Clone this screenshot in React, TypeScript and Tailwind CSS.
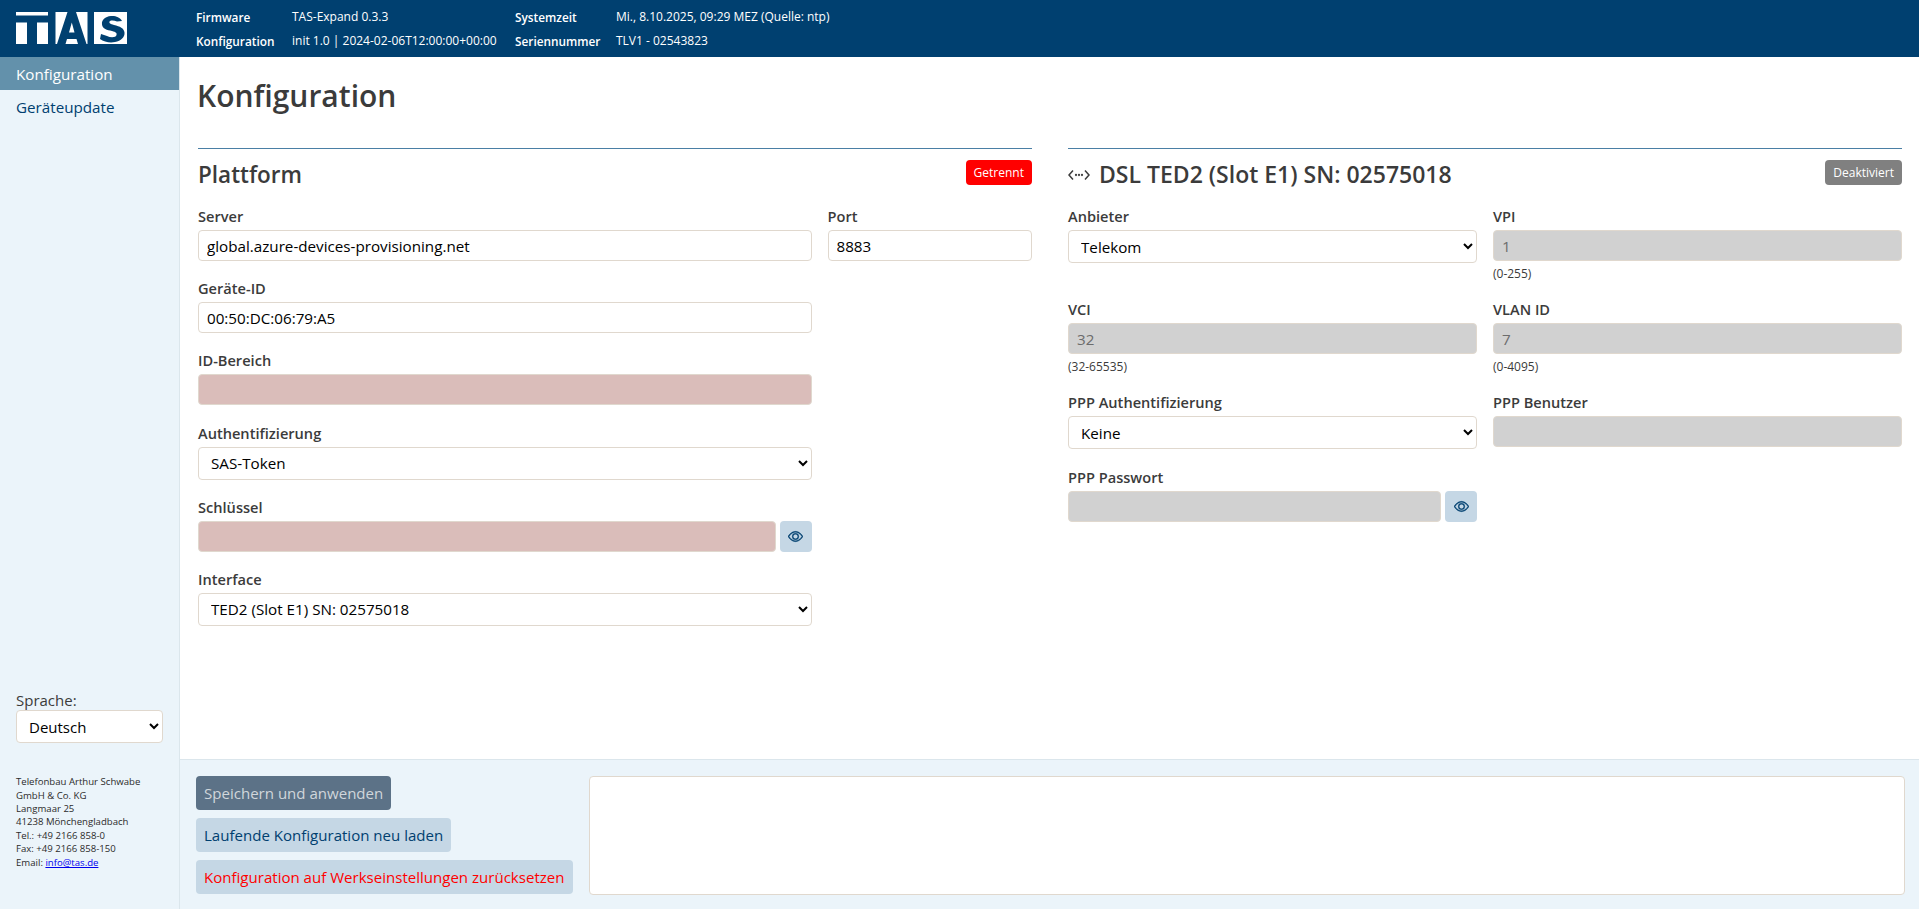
import React from "react";
import { BsEye } from "react-icons/bs";

const inputBase = "block w-full h-[31px] px-[8px] border border-[#e0d8ce] rounded-[4px] text-[15.2px] leading-[20px] outline-none";

function Label({ children }: { children: React.ReactNode }) {
  return <label className="block h-[20px] mb-[4px] text-[14.6px] leading-[21px] font-[550] text-[#3b3b3b]">{children}</label>;
}
function Text({ label, value = "", tone = "white", hint }: { label: string; value?: string; tone?: "white" | "red" | "grey"; hint?: string }) {
  const cls = tone === "white" ? "bg-white text-black" : tone === "red" ? "bg-[#dabdba] text-black" : "bg-[#d1d1d1] text-[#6c6c6c]";
  return (
    <div>
      <Label>{label}</Label>
      <input readOnly value={value} className={`${inputBase} ${cls}`} />
      {hint ? <div className="h-[21px] pt-[5px] text-[12px] leading-[16px] text-[#3b3b3b]">{hint}</div> : null}
    </div>
  );
}
function Select({ label, value }: { label: string; value: string }) {
  return (
    <div>
      <Label>{label}</Label>
      <select defaultValue={value} className="block w-full h-[33px] pl-[8px] pr-[2px] bg-white border border-[#e0d8ce] rounded-[4px] text-[15.2px] text-black outline-none">
        <option>{value}</option>
      </select>
    </div>
  );
}
function Secret({ label, tone }: { label: string; tone: string }) {
  return (
    <div>
      <Label>{label}</Label>
      <div className="flex gap-[4px]">
        <input readOnly value="" className={`${inputBase} flex-1 min-w-0 ${tone}`} />
        <button className="w-[32px] h-[31px] shrink-0 rounded-[4px] bg-[#c5d7e5] text-[#004070] flex items-center justify-center">
          <BsEye className="w-[15px] h-[15px] stroke-[0.4px]" />
        </button>
      </div>
    </div>
  );
}
function Logo() {
  return (
    <svg width="112" height="33" viewBox="0 0 112 33" className="block">
      <rect x="0" y="0" width="32" height="3.5" fill="#fff" />
      <rect x="0" y="10.5" width="11" height="21.5" fill="#fff" />
      <rect x="21" y="10.5" width="11" height="21.5" fill="#fff" />
      <rect x="39.5" y="0" width="32" height="32" fill="#fff" />
      <path d="M41 32 L51.5 0 H60 L70.5 32 H62 L60.5 27 H51 L49.5 32 Z M53 20.5 H58.5 L55.8 10.5 Z" fill="#004070" fillRule="evenodd" />
      <rect x="78" y="0" width="33" height="32" fill="#fff" />
      <path d="M106 9 C104 5 99 3.5 95 4 C89 4.5 85.5 8 86 12.5 C86.5 17 91 18 96 19 C100 20 101 21 100.5 23 C100 25.5 95 26 91 24 L85 22 L84 27 C88 30 94 31 99 30 C105 29 109 25 108.5 20.5 C108 16 104 14.5 98 13 C94 12 93 11 93.5 9.5 C94 8 98 8 101 9.5 Z" fill="#004070" />
    </svg>
  );
}
function Dsl() {
  return (
    <svg width="22" height="14" viewBox="0 0 22 14" fill="none" stroke="#3b3b3b" strokeWidth="1.5" className="shrink-0">
      <path d="M5 2.5 L1 7 L5 11.5" />
      <path d="M17 2.5 L21 7 L17 11.5" />
      <circle cx="8" cy="7" r="0.4" />
      <circle cx="11" cy="7" r="0.4" />
      <circle cx="14" cy="7" r="0.4" />
    </svg>
  );
}
function Btn({ children, cls }: { children: React.ReactNode; cls: string }) {
  return <button className={`block h-[34px] px-[8px] rounded-[4px] text-[15.05px] leading-[20px] whitespace-nowrap ${cls}`}>{children}</button>;
}

export default function App() {
  return (
    <div className="h-screen flex flex-col overflow-hidden bg-white text-[#3b3b3b]" style={{ fontFamily: '"Open Sans", "Noto Sans", sans-serif' }}>
      <header className="h-[57px] shrink-0 bg-[#004070] text-white flex items-center">
        <div className="w-[196px] pl-[16px] shrink-0"><Logo /></div>
        <div className="grid grid-cols-[96px_223px_101px_1fr] grid-rows-[24px_24px] items-center text-[12px] leading-[24px]">
          <b className="font-semibold text-[11.8px]">Firmware</b><span>TAS-Expand 0.3.3</span>
          <b className="font-semibold text-[11.8px]">Systemzeit</b><span>Mi., 8.10.2025, 09:29 MEZ (Quelle: ntp)</span>
          <b className="font-semibold text-[11.8px]">Konfiguration</b><span>init 1.0 | 2024-02-06T12:00:00+00:00</span>
          <b className="font-semibold text-[11.8px]">Seriennummer</b><span>TLV1 - 02543823</span>
        </div>
      </header>
      <div className="flex-1 flex min-h-0">
        <aside className="w-[180px] shrink-0 bg-[#ebf4fa] border-r border-[#dbe6ec] flex flex-col">
          <a className="block h-[33px] px-[16px] bg-[#6391ab] text-white text-[15.2px] leading-[35px]">Konfiguration</a>
          <a className="block h-[33px] px-[16px] text-[#004070] text-[15.2px] leading-[35px]">Geräteupdate</a>
          <div className="mt-auto px-[16px]">
            <div className="text-[15px] leading-[20px] text-[#3b3b3b]">Sprache:</div>
            <select defaultValue="Deutsch" className="block w-[147px] h-[33px] pl-[8px] bg-white border border-[#e0d8ce] rounded-[4px] text-[15px] text-black">
              <option>Deutsch</option>
            </select>
            <div className="mt-[32px] mb-[40px] text-[9.6px] leading-[13.4px] font-medium text-[#2b2b2b]">
              <div>Telefonbau Arthur Schwabe</div>
              <div>GmbH &amp; Co. KG</div>
              <div>Langmaar 25</div>
              <div>41238 Mönchengladbach</div>
              <div>Tel.: +49 2166 858-0</div>
              <div>Fax: +49 2166 858-150</div>
              <div>Email: <a className="text-[#0000ee] underline">info@tas.de</a></div>
            </div>
          </div>
        </aside>
        <div className="flex-1 min-w-0 flex flex-col">
          <main className="flex-1 min-h-0 pl-[18px] pr-[17px]">
            <h1 className="pt-[18px] h-[91px] -ml-[1px] text-[30px] leading-[42px] font-semibold text-[#3b3b3b]">Konfiguration</h1>
            <div className="grid grid-cols-2 gap-x-[36px]">
              <section className="border-t border-[#4a7fa5]">
                <div className="h-[57px] pt-[11px] flex items-start justify-between">
                  <h2 className="text-[22.5px] leading-[29px] font-semibold">Plattform</h2>
                  <span className="h-[25px] px-[8px] rounded-[4px] bg-[#ff0000] text-white text-[12px] leading-[25px]">Getrennt</span>
                </div>
                <div className="grid grid-cols-[3fr_1fr] gap-x-[16px] gap-y-[17.2px]">
                  <Text label="Server" value="global.azure-devices-provisioning.net" />
                  <Text label="Port" value="8883" />
                  <div className="col-start-1"><Text label="Geräte-ID" value="00:50:DC:06:79:A5" /></div>
                  <div className="col-start-1"><Text label="ID-Bereich" tone="red" /></div>
                  <div className="col-start-1"><Select label="Authentifizierung" value="SAS-Token" /></div>
                  <div className="col-start-1"><Secret label="Schlüssel" tone="bg-[#dabdba]" /></div>
                  <div className="col-start-1"><Select label="Interface" value="TED2 (Slot E1) SN: 02575018" /></div>
                </div>
              </section>
              <section className="border-t border-[#4a7fa5]">
                <div className="h-[57px] pt-[11px] flex items-start justify-between">
                  <h2 className="flex items-center gap-[9px] text-[23px] leading-[29px] font-semibold"><Dsl />DSL TED2 (Slot E1) SN: 02575018</h2>
                  <span className="h-[25px] px-[8px] rounded-[4px] bg-[#808080] text-white text-[12px] leading-[25px]">Deaktiviert</span>
                </div>
                <div className="grid grid-cols-2 gap-x-[16px] gap-y-[17.2px]">
                  <Select label="Anbieter" value="Telekom" />
                  <Text label="VPI" value="1" tone="grey" hint="(0-255)" />
                  <Text label="VCI" value="32" tone="grey" hint="(32-65535)" />
                  <Text label="VLAN ID" value="7" tone="grey" hint="(0-4095)" />
                  <Select label="PPP Authentifizierung" value="Keine" />
                  <Text label="PPP Benutzer" tone="grey" />
                  <Secret label="PPP Passwort" tone="bg-[#d1d1d1]" />
                </div>
              </section>
            </div>
          </main>
          <footer className="h-[150px] shrink-0 bg-[#ebf4fa] border-t border-[#dbe6ec] pl-[16px] pr-[14px] pt-[16px] flex gap-[16px]">
            <div className="flex flex-col items-start gap-[8px]">
              <Btn cls="bg-[#5c7287] text-[#d0d6db]">Speichern und anwenden</Btn>
              <Btn cls="bg-[#c5d7e5] text-[#004070]">Laufende Konfiguration neu laden</Btn>
              <Btn cls="bg-[#c5d7e5] text-[#ff0000]">Konfiguration auf Werkseinstellungen zurücksetzen</Btn>
            </div>
            <div className="flex-1 h-[119px] bg-white border border-[#e0d8ce] rounded-[4px]" />
          </footer>
        </div>
      </div>
    </div>
  );
}
